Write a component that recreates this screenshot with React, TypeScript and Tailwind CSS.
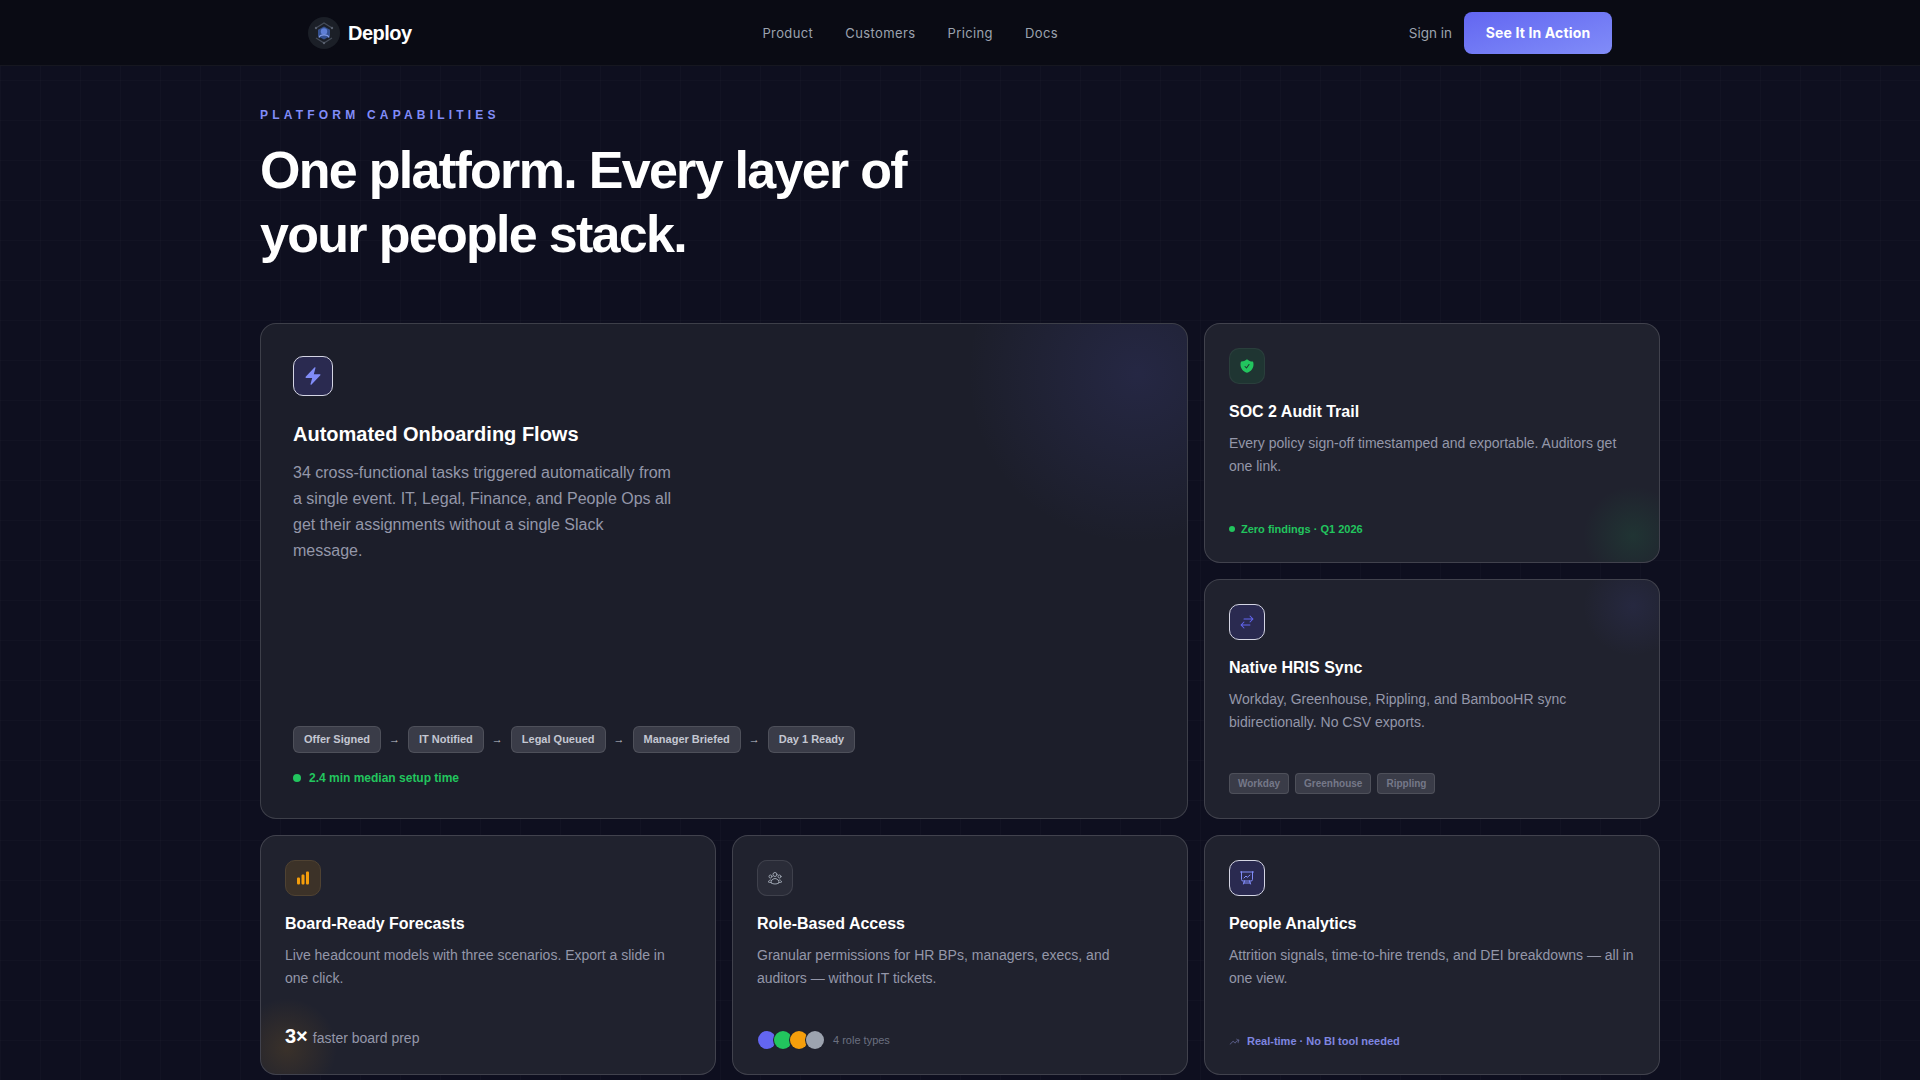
import { ReactNode } from 'react'
import {
  HiBolt,
  HiShieldCheck,
  HiArrowsRightLeft,
  HiChartBar,
  HiOutlineUserGroup,
  HiOutlinePresentationChartLine,
  HiArrowTrendingUp,
} from 'react-icons/hi2'

const sans = "font-['Liberation_Sans',Arial,sans-serif]"
const inter = "font-['Inter',sans-serif]"

const flowSteps = ['Offer Signed', 'IT Notified', 'Legal Queued', 'Manager Briefed', 'Day 1 Ready']

function Logo() {
  return (
    <svg viewBox="0 0 32 32" className="w-8 h-8">
      <circle cx="16" cy="16" r="16" fill="#1b1f27" />
      <path d="M8 11 16 6l8 5M8 21l8 5 8-5" fill="none" stroke="#454c59" strokeWidth="1.3" />
      <path d="M16 9.500l6 3.300v6.400l-6 3.300-6-3.300v-6.400z" fill="#34508f" />
      <circle cx="16" cy="14.500" r="3.200" fill="#5f7fd6" />
      <path d="M11 20.500c1-3.500 9-3.500 10 0" fill="none" stroke="#7f9ae6" strokeWidth="1.300" />
      <circle cx="16" cy="26" r="1.200" fill="#59606e" />
      <circle cx="8" cy="11" r="1.200" fill="#59606e" />
      <circle cx="24" cy="11" r="1.200" fill="#59606e" />
    </svg>
  )
}

function IconTile({ children, className }: { children: ReactNode; className: string }) {
  return <div className={`flex items-center justify-center shrink-0 border ${className}`}>{children}</div>
}

function Card({
  icon,
  title,
  text,
  footer,
  glow,
}: {
  icon: ReactNode
  title: string
  text: string
  footer: ReactNode
  glow?: ReactNode
}) {
  return (
    <div className="relative overflow-hidden flex flex-col p-6 rounded-2xl border border-white/15 bg-[#20222e]">
      {glow}
      {icon}
      <h3 className="mt-4 text-base leading-6 font-bold text-white">{title}</h3>
      <p className="mt-2 text-sm leading-[23px] text-[#9497a9]">{text}</p>
      <div className="mt-auto">{footer}</div>
    </div>
  )
}

export default function App() {
  return (
    <div className={`h-screen overflow-hidden bg-[#0e0f1f] bg-[linear-gradient(rgba(255,255,255,0.014)_1px,transparent_1px),linear-gradient(90deg,rgba(255,255,255,0.014)_1px,transparent_1px)] bg-[size:40px_40px] ${sans}`}>
      <nav className="h-[66px] border-b border-white/5 bg-[#0a0b14]">
        <div className="max-w-[1400px] h-full mx-auto px-12 flex items-center justify-between">
          <div className="flex items-center gap-2">
            <Logo />
            <span className="text-xl font-bold tracking-[-0.5px] text-white">Deploy</span>
          </div>
          <div className={`flex items-center gap-8 pt-[2px] text-[13px] tracking-[0.03em] text-[#9ca3af] ${inter}`}>
            <a>Product</a>
            <a>Customers</a>
            <a>Pricing</a>
            <a>Docs</a>
          </div>
          <div className={`flex items-center gap-3 ${inter}`}>
            <a className="pt-px text-[13.5px] text-[#9ca3af]">Sign in</a>
            <button className="w-[148px] h-[42px] rounded-lg bg-gradient-to-br from-[#6366f1] to-[#818cf8] text-sm font-bold tracking-[0.01em] text-white">
              See It In Action
            </button>
          </div>
        </div>
      </nav>

      <main className="max-w-[1400px] mx-auto pt-10">
        <div className="text-xs leading-[18px] font-bold tracking-[4.2px] text-[#818cf8]">PLATFORM CAPABILITIES</div>
        <h1 className="mt-[14px] max-w-[720px] text-[52px] leading-[64px] font-bold tracking-[-1.7px] text-white">
          One platform. Every layer of your people stack.
        </h1>

        <div className="mt-[57px] grid grid-cols-3 auto-rows-[240px] gap-4">
          <div className="relative overflow-hidden col-span-2 row-span-2 flex flex-col pt-8 px-8 pb-[31px] rounded-2xl border border-white/15 bg-[#1c1e2a]">
            <div className="absolute -top-[120px] -right-[120px] w-[340px] h-[340px] rounded-full bg-[radial-gradient(closest-side,rgba(99,102,241,0.13),transparent)]" />
            <IconTile className="w-10 h-10 rounded-[10px] bg-[#2a2a50] border-[#d4d5e4]">
              <HiBolt className="w-5 h-5 text-[#818cf8]" />
            </IconTile>
            <h2 className="mt-[24px] text-xl leading-7 font-bold text-white">Automated Onboarding Flows</h2>
            <p className="mt-[12px] max-w-[380px] text-base leading-[26px] text-[#9497a9]">
              34 cross-functional tasks triggered automatically from a single event. IT, Legal, Finance, and People Ops all get their assignments without a single Slack message.
            </p>
            <div className="mt-auto">
              <div className="flex items-center gap-2">
                {flowSteps.map((step, i) => (
                  <div key={step} className="flex items-center gap-2">
                    {i > 0 && <span className="text-[11px] text-[#c4c7d2]">→</span>}
                    <span className="h-[27px] flex items-center px-[10px] rounded-md border border-white/10 bg-[#3a3c48] text-[11px] font-bold text-[#c4c7d2]">
                      {step}
                    </span>
                  </div>
                ))}
              </div>
              <div className="mt-4 flex items-center gap-2 text-xs leading-[18px] font-bold text-[#22c55e]">
                <span className="w-2 h-2 rounded-full bg-[#22c55e]" />
                2.4 min median setup time
              </div>
            </div>
          </div>

          <Card
            icon={
              <IconTile className="w-9 h-9 rounded-[10px] bg-[#1f3532] border-white/5">
                <HiShieldCheck className="w-4 h-4 text-[#22c55e]" />
              </IconTile>
            }
            title="SOC 2 Audit Trail"
            text="Every policy sign-off timestamped and exportable. Auditors get one link."
            glow={<div className="absolute -bottom-6 -right-6 w-[100px] h-[100px] rounded-full bg-[radial-gradient(closest-side,rgba(34,197,94,0.11),transparent)]" />}
            footer={
              <div className="flex items-center gap-[6px] text-[11px] leading-[18px] font-bold text-[#22c55e]">
                <span className="w-[6px] h-[6px] rounded-full bg-[#22c55e]" />
                Zero findings · Q1 2026
              </div>
            }
          />

          <Card
            icon={
              <IconTile className="w-9 h-9 rounded-[10px] bg-[#2a2a50] border-[#d4d5e4]">
                <HiArrowsRightLeft className="w-4 h-4 text-[#6366f1]" />
              </IconTile>
            }
            title="Native HRIS Sync"
            text="Workday, Greenhouse, Rippling, and BambooHR sync bidirectionally. No CSV exports."
            glow={<div className="absolute -top-6 -right-6 w-[100px] h-[100px] rounded-full bg-[radial-gradient(closest-side,rgba(99,102,241,0.09),transparent)]" />}
            footer={
              <div className="flex items-center gap-[6px]">
                {['Workday', 'Greenhouse', 'Rippling'].map((tag) => (
                  <span key={tag} className="h-[21px] flex items-center px-2 rounded border border-white/10 bg-[#3a3c48] text-[10px] font-bold text-[#757888]">
                    {tag}
                  </span>
                ))}
              </div>
            }
          />

          <Card
            icon={
              <IconTile className="w-9 h-9 rounded-[10px] bg-[#3c3228] border-[#4f4232]">
                <HiChartBar className="w-4 h-4 text-[#f59e0b]" />
              </IconTile>
            }
            title="Board-Ready Forecasts"
            text="Live headcount models with three scenarios. Export a slide in one click."
            glow={<div className="absolute -bottom-6 -left-6 w-[100px] h-[100px] rounded-full bg-[radial-gradient(closest-side,rgba(245,158,11,0.12),transparent)]" />}
            footer={
              <div className="relative flex items-baseline gap-[5px]">
                <span className="text-xl font-bold text-white">3×</span>
                <span className="text-sm text-[#9497a9]">faster board prep</span>
              </div>
            }
          />

          <Card
            icon={
              <IconTile className="w-9 h-9 rounded-[10px] bg-[#2a2c38] border-white/10">
                <HiOutlineUserGroup className="w-4 h-4 text-[#9ca3af]" />
              </IconTile>
            }
            title="Role-Based Access"
            text="Granular permissions for HR BPs, managers, execs, and auditors — without IT tickets."
            footer={
              <div className="flex items-center gap-[9px] pb-px">
                <div className="flex ml-px">
                  <span className="w-[18px] h-[18px] rounded-full ring-1 ring-[#20222e] bg-[#6366f1]" />
                  <span className="-ml-[2px] w-[18px] h-[18px] rounded-full ring-1 ring-[#20222e] bg-[#22c55e]" />
                  <span className="-ml-[2px] w-[18px] h-[18px] rounded-full ring-1 ring-[#20222e] bg-[#f59e0b]" />
                  <span className="-ml-[2px] w-[18px] h-[18px] rounded-full ring-1 ring-[#20222e] bg-[#9ca3af]" />
                </div>
                <span className="text-[11px] text-[#6b7080]">4 role types</span>
              </div>
            }
          />

          <Card
            icon={
              <IconTile className="w-9 h-9 rounded-[10px] bg-[#2a2a50] border-[#d4d5e4]">
                <HiOutlinePresentationChartLine className="w-4 h-4 text-[#818cf8]" />
              </IconTile>
            }
            title="People Analytics"
            text="Attrition signals, time-to-hire trends, and DEI breakdowns — all in one view."
            footer={
              <div className="flex items-center gap-[7px] text-[11px] leading-[18px] font-bold text-[#7f86e0]">
                <HiArrowTrendingUp className="w-[11px] h-[11px] text-[#5f6390]" />
                Real-time · No BI tool needed
              </div>
            }
          />
        </div>
      </main>
    </div>
  )
}
